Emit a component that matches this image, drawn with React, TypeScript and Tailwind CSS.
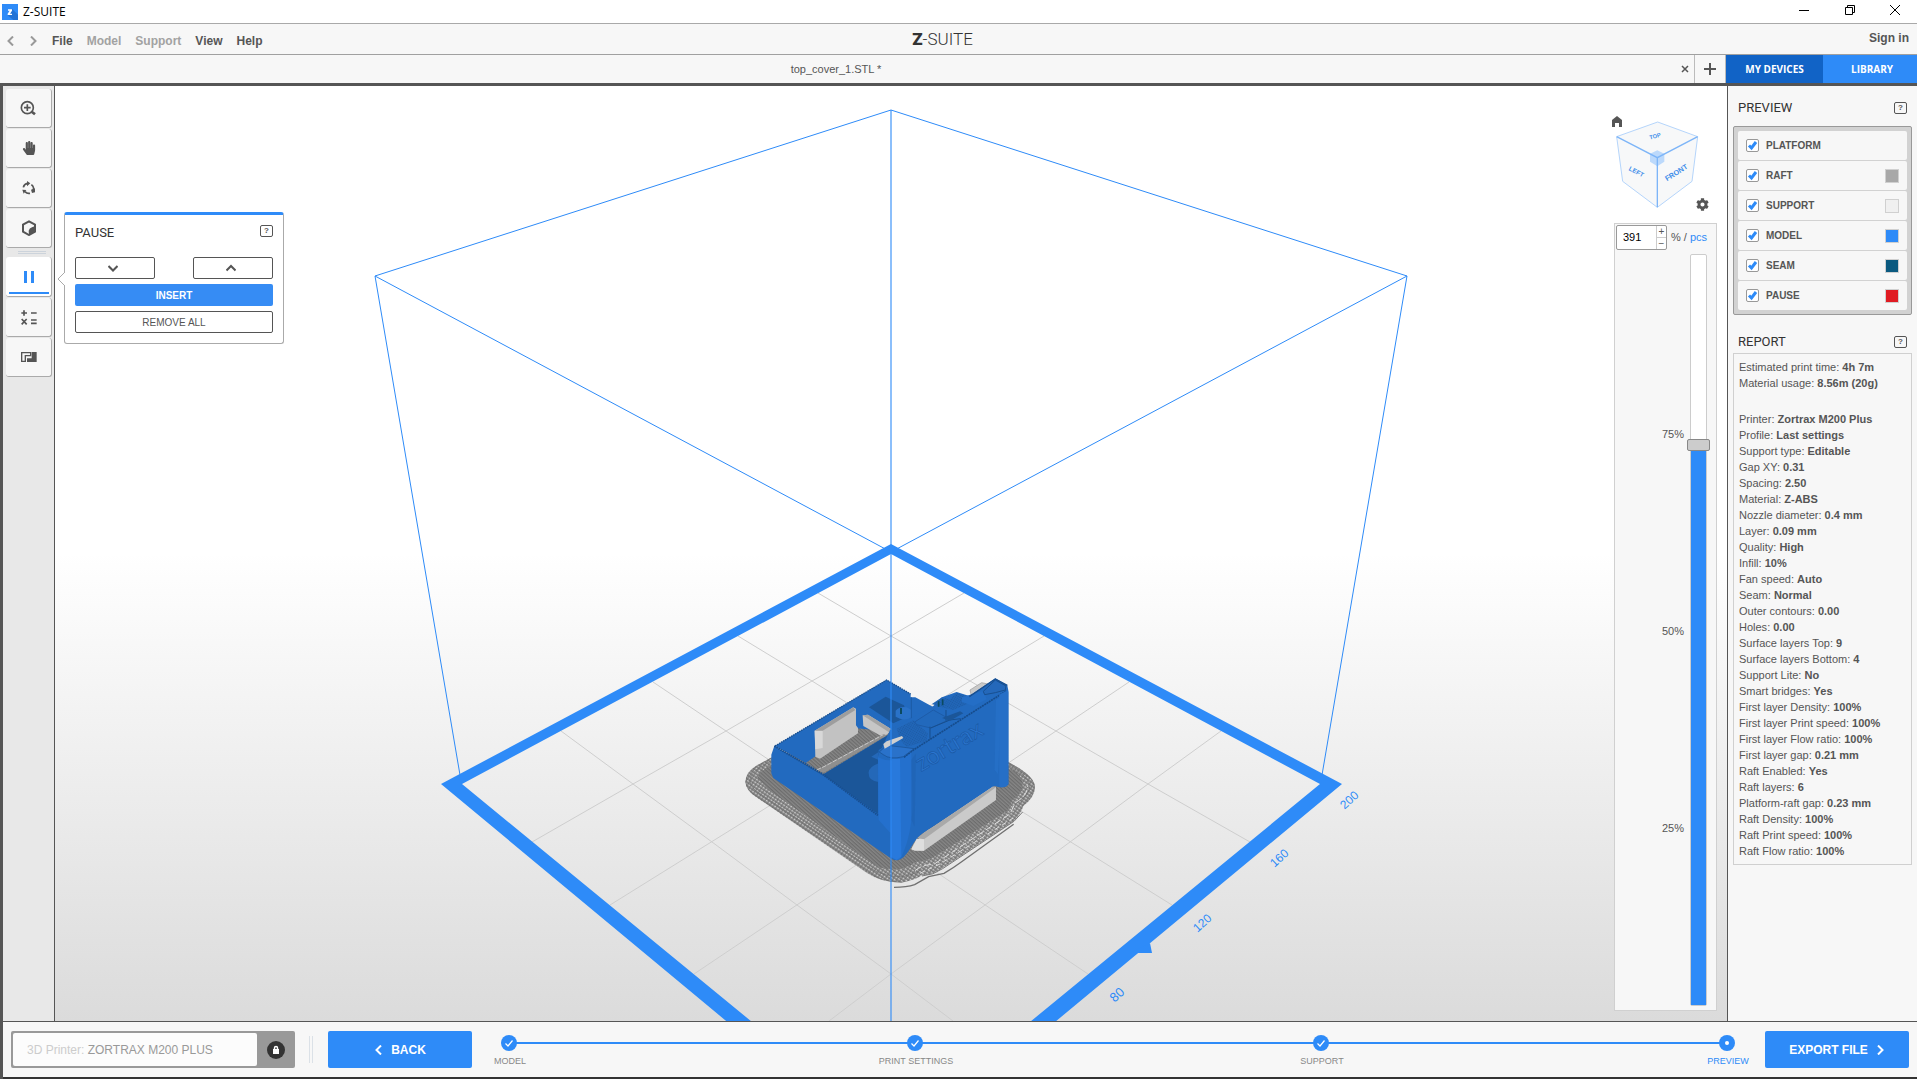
import { useState } from 'react'
import { FaHandPaper, FaCog } from 'react-icons/fa'

const layers = [
  { id: 'platform', label: 'PLATFORM', swatch: '' },
  { id: 'raft', label: 'RAFT', swatch: 'bg-[#a8a8a8]' },
  { id: 'support', label: 'SUPPORT', swatch: 'bg-[#f0f0f0]' },
  { id: 'model', label: 'MODEL', swatch: 'bg-[#2e8bf8]' },
  { id: 'seam', label: 'SEAM', swatch: 'bg-[#0b5a80]' },
  { id: 'pause', label: 'PAUSE', swatch: 'bg-[#e01b22]' },
]

const summary = [
  ['Estimated print time', '4h 7m'],
  ['Material usage', '8.56m (20g)'],
]

const report = [
  ['Printer', 'Zortrax M200 Plus'],
  ['Profile', 'Last settings'],
  ['Support type', 'Editable'],
  ['Gap XY', '0.31'],
  ['Spacing', '2.50'],
  ['Material', 'Z-ABS'],
  ['Nozzle diameter', '0.4 mm'],
  ['Layer', '0.09 mm'],
  ['Quality', 'High'],
  ['Infill', '10%'],
  ['Fan speed', 'Auto'],
  ['Seam', 'Normal'],
  ['Outer contours', '0.00'],
  ['Holes', '0.00'],
  ['Surface layers Top', '9'],
  ['Surface layers Bottom', '4'],
  ['Support Lite', 'No'],
  ['Smart bridges', 'Yes'],
  ['First layer Density', '100%'],
  ['First layer Print speed', '100%'],
  ['First layer Flow ratio', '100%'],
  ['First layer gap', '0.21 mm'],
  ['Raft Enabled', 'Yes'],
  ['Raft layers', '6'],
  ['Platform-raft gap', '0.23 mm'],
  ['Raft Density', '100%'],
  ['Raft Print speed', '100%'],
  ['Raft Flow ratio', '100%'],
]

const steps = ['MODEL', 'PRINT SETTINGS', 'SUPPORT', 'PREVIEW']

const MAX_LAYER = 521

function Chevron({ d, size = 9, width = 2 }: { d: string; size?: number; width?: number }) {
  return (
    <svg width={size} height={size} viewBox="0 0 10 10" fill="none" stroke="currentColor" strokeWidth={width}>
      <path d={d} />
    </svg>
  )
}

const LEFT = 'M7 0.5L2.5 5L7 9.5'
const RIGHT = 'M3 0.5L7.5 5L3 9.5'
const UP = 'M0.5 7.5L5 3L9.5 7.5'
const DOWN = 'M0.5 3L5 7.5L9.5 3'

function HelpButton() {
  return (
    <button aria-label="Help" className="flex h-3 w-[13px] items-center justify-center rounded-xs border border-[#555] text-[8px] font-bold leading-none text-[#555]">
      ?
    </button>
  )
}

function TitleBar() {
  return (
    <header className="flex h-6 items-start border-b border-[#a9a9a9] bg-white">
      <div className="flex h-[23px] items-center gap-[5px] pl-0.5 font-['Open_Sans',sans-serif] text-xs text-black">
        <svg width="16" height="16" viewBox="0 0 48 48">
          <rect width="48" height="48" fill="#2e8bf8" />
          <path d="M30 14L48 32V48H34L17 34Z" fill="#2273d6" />
          <path d="M18 16H30V20L24 29H30V33H17V29L23 20H18Z" fill="#fff" />
        </svg>
        Z-SUITE
      </div>
      <div className="ml-auto flex h-5 items-center">
        <button aria-label="Minimize" className="flex w-[46px] justify-center">
          <svg width="10" height="10" viewBox="0 0 10 10" stroke="#000"><path d="M0 5.5H10" /></svg>
        </button>
        <button aria-label="Restore" className="flex w-[46px] justify-center">
          <svg width="10" height="10" viewBox="0 0 10 10" fill="none" stroke="#000"><path d="M0.5 2.5H7.5V9.5H0.5ZM2.5 2.5V0.5H9.5V7.5H7.5" /></svg>
        </button>
        <button aria-label="Close" className="flex w-11 justify-center">
          <svg width="10" height="10" viewBox="0 0 10 10" stroke="#000"><path d="M0 0L10 10M10 0L0 10" /></svg>
        </button>
      </div>
    </header>
  )
}

function MenuBar() {
  return (
    <div className="grid h-[31px] grid-cols-[1fr_auto_1fr] items-center border-b border-[#a0a0a0] bg-[#f7f7f7] text-xs font-bold">
      <nav className="flex items-center gap-3.5 pl-1.5 pt-1">
        <div className="flex gap-3 text-[#999]">
          <button aria-label="Undo"><Chevron d={LEFT} size={10} /></button>
          <button aria-label="Redo"><Chevron d={RIGHT} size={10} /></button>
        </div>
        <button>File</button>
        <button disabled className="text-[#a2a2a2]">Model</button>
        <button disabled className="text-[#a2a2a2]">Support</button>
        <button>View</button>
        <button>Help</button>
      </nav>
      <div className="pr-8 font-[Roboto,sans-serif] text-[17px] font-light leading-none text-[#333]">
        <span className="font-black">Z</span>-SUITE
      </div>
      <a href="#" className="justify-self-end pr-2 pb-0.5">Sign in</a>
    </div>
  )
}

function TabBar() {
  return (
    <div className="flex h-[31px] border-b-3 border-[#555] bg-[#f7f7f7]">
      <button className="flex-1 text-[11px]">top_cover_1.STL *</button>
      <button aria-label="Close tab" className="flex w-[22px] items-center justify-center pl-1">
        <svg width="8" height="8" viewBox="0 0 8 8" stroke="#555" strokeWidth="1.500"><path d="M1 1L7 7M7 1L1 7" /></svg>
      </button>
      <button aria-label="New tab" className="flex w-8 items-center justify-center border-x border-[#bbb]">
        <svg width="12" height="12" viewBox="0 0 12 12" stroke="#555" strokeWidth="2"><path d="M0 6H12M6 0V12" /></svg>
      </button>
      <button className="w-[97px] bg-[#1163c6] font-['Open_Sans',sans-serif] text-[10px] font-bold text-white">MY DEVICES</button>
      <button className="w-[94px] bg-[#2e8bf8] pl-1 font-['Open_Sans',sans-serif] text-[10px] font-bold text-white">LIBRARY</button>
    </div>
  )
}

const tool = 'flex h-[39px] w-[46px] items-center justify-center rounded-[3px] border-b border-r border-[#aaa] bg-[#f7f7f7] text-[#555]'

function Toolbar() {
  return (
    <nav className="flex w-[52px] flex-col gap-px border-r border-[#555] bg-[#e8e8e8] pl-[3px] pt-[3px]">
      <button aria-label="Zoom" className={tool}>
        <svg width="17" height="16" viewBox="62 304 51 48" fill="none" stroke="currentColor" strokeWidth="5">
          <circle cx="84" cy="327" r="18" />
          <path d="M84 317V337M74 327H94" />
          <path d="M97 339L107 347" strokeWidth="8" />
        </svg>
      </button>
      <button aria-label="Pan" className={tool}><FaHandPaper size={14} /></button>
      <button aria-label="Rotate" className={tool}>
        <svg width="15" height="15" viewBox="64 544 45 45" fill="none" stroke="currentColor" strokeWidth="5">
          <path d="M71 563A16 16 0 0 1 84 551M95 555A16 16 0 0 1 101 572M91 581A16 16 0 0 1 76 576" />
          <path d="M82 544L92 551L82 560ZM94 570L106 566L106 578L97 580ZM68 570L80 571L72 582Z" fill="currentColor" stroke="none" />
        </svg>
      </button>
      <button aria-label="Views" className={tool}>
        <svg width="16" height="16" viewBox="63 662 48 48">
          <path d="M87 666L105 676V697L87 707L69 697V676Z" fill="none" stroke="currentColor" strokeWidth="6" />
          <path d="M106 680V697L87 708L86 694Q88 686 96 684Z" fill="currentColor" />
        </svg>
      </button>
      <div className="ml-3 mt-0.5 mb-0.5 h-[3px] w-7 border-y border-[#ccd3db]" />
      <button aria-label="Pause" className="flex h-10 w-[46px] flex-col items-center rounded-[3px] border-b border-r border-[#aaa] bg-white pt-3.5 text-[#2e8bf8]">
        <svg width="10" height="12" viewBox="0 0 10 12" fill="currentColor"><path d="M0 0H3V12H0ZM7 0H10V12H7Z" /></svg>
        <span className="mt-auto mb-0.5 h-0.5 w-10 bg-[#2e8bf8]" />
      </button>
      <button aria-label="Calculate" className={tool}>
        <svg width="16" height="15" viewBox="63 931 48 45" fill="none" stroke="currentColor" strokeWidth="5">
          <path d="M64 940H81M72 932V948M93 940H110M93 961H110M93 971H110M65 958L80 974M80 958L65 974" />
        </svg>
      </button>
      <button aria-label="Raft" className={tool}>
        <svg width="16" height="10" viewBox="63 1057 48 30">
          <path d="M65 1059H92V1068H76V1085H65Z" fill="none" stroke="currentColor" strokeWidth="4" />
          <path d="M81 1076H95V1057H110V1087H81Z" fill="currentColor" />
        </svg>
      </button>
    </nav>
  )
}

function PausePanel() {
  const outline = 'flex h-[22px] items-center justify-center rounded-xs border border-[#555] bg-white text-[#555]'
  return (
    <section className="absolute left-[9px] top-[126px] w-[220px] rounded-[3px] border border-t-3 border-[#aaa] border-t-[#2e8bf8] bg-white px-2.5 pb-2.5 pt-2.5">
      <svg className="absolute -left-2 top-14" width="8" height="16" viewBox="0 0 8 16" fill="#fff" stroke="#aaa">
        <path d="M8 1L1 8L8 15" />
      </svg>
      <div className="flex h-4 items-start justify-between">
        <h2 className="font-[Roboto,sans-serif] text-[13px] leading-4 text-[#333]">PAUSE</h2>
        <HelpButton />
      </div>
      <div className="mt-4 flex justify-between">
        <button aria-label="Next pause" className={outline + ' w-20 pr-1'}><Chevron d={DOWN} size={10} /></button>
        <button aria-label="Previous pause" className={outline + ' w-20 pr-1'}><Chevron d={UP} size={10} /></button>
      </div>
      <button className="mt-[5px] flex h-[22px] w-full items-center justify-center rounded-xs bg-[#368cf4] text-[10px] font-bold text-white">INSERT</button>
      <button className={outline + ' mt-[5px] w-full text-[10px]'}>REMOVE ALL</button>
    </section>
  )
}

// sliced part, drawn three times larger and scaled down by the parent
function PrintedPart() {
  return (
    <g transform="translate(720 660) scale(0.3333)">
      <defs>
        <pattern id="rim" width="10" height="9" patternUnits="userSpaceOnUse" patternTransform="rotate(34)">
          <rect width="10" height="9" fill="#858585" />
          <path d="M0 2H6" stroke="#d6d6d6" strokeWidth="3" />
          <path d="M4 7H10" stroke="#666" strokeWidth="2" />
        </pattern>
        <pattern id="raft" width="9" height="8" patternUnits="userSpaceOnUse" patternTransform="rotate(42)">
          <rect width="9" height="8" fill="#868686" />
          <path d="M0 2H9" stroke="#666" strokeWidth="3" />
        </pattern>
        <pattern id="mesh" width="6" height="6" patternUnits="userSpaceOnUse" patternTransform="rotate(30)">
          <rect width="6" height="6" fill="#2166b8" />
          <path d="M0 1H3" stroke="#184f90" strokeWidth="2" />
        </pattern>
      </defs>
      <path d="M500 110L155 292L112 315Q76 336 76 366Q78 392 108 411L440 638Q484 668 545 668Q584 661 606 646Q640 645 668 624L878 486Q904 462 910 438Q946 412 945 378Q940 344 864 306L700 220Z" fill="url(#rim)" />
      <path d="M500 110L150 318Q112 336 114 356L150 392L476 622Q540 640 588 606Q620 604 640 592L862 452L878 420Q912 394 908 366Q900 338 864 324L700 220Z" fill="url(#raft)" />
      <g fill="none" stroke="#707070" strokeWidth="2">
        <path d="M155 294L114 317Q78 338 78 366Q80 391 110 410L442 636Q484 666 545 666" />
        <path d="M155 302L122 322Q90 340 90 362Q92 384 120 402L450 624Q490 650 545 650Q580 646 604 628" />
        <path d="M866 308Q940 346 943 378Q944 410 908 436" />
        <path d="M866 316Q926 348 930 376Q928 404 894 426" />
      </g>
      <g fill="none" stroke="#ddd" strokeWidth="3" strokeDasharray="22 9">
        <path d="M585 632Q610 612 640 614L870 462L886 428Q926 404 922 376" />
        <path d="M600 640Q634 624 660 612L880 474" strokeDasharray="14 12" />
      </g>
      <path d="M606 648Q640 646 668 626L882 484L908 456" fill="none" stroke="#777" strokeWidth="3" />
      <path d="M522 682Q560 682 584 674L626 650L672 640Q700 624 724 606L881 493" fill="none" stroke="#707070" strokeWidth="4" />

      <path d="M750 90L785 68L804 72V90L755 110Z" fill="#c9c9c9" stroke="#999" strokeWidth="2" />
      {/* back walls and floor */}
      <path d="M165 258L500 60L572 102V112L586 112L638 140V200L480 290V480L310 340L256 308Z" fill="#226abf" />
      <path d="M447 142L497 110L552 136L562 170L520 190Z" fill="#1b5699" />
      <path d="M258 308L410 205L520 215L312 342Z" fill="url(#raft)" />
      <path d="M284 212L400 142L408 146V196L414 204V220L300 296L286 290Z" fill="#c2c2c2" />
      <path d="M284 212L300 206L308 212V264L286 268Z" fill="#d8d8d8" />
      <path d="M284 212L400 142L406 150L308 212" fill="#9d9d9d" />
      <path d="M428 166L444 164L518 210L490 232L430 198Z" fill="#c6c6c6" />
      <path d="M428 166L444 164L518 210L506 216Z" fill="#a5a5a5" />
      <path d="M312 342L516 218L545 230L476 270V470L290 344Z" fill="#1b5699" />
      <path d="M290 332L312 318L490 222L500 226L312 338Z" fill="#8f8f8f" />
      <path d="M290 330L312 320L490 224" fill="none" stroke="#c9c9c9" strokeWidth="3" strokeDasharray="14 4" />
      <path d="M446 340Q444 322 476 310V366Q446 364 446 340ZM454 290L476 276V300Z" fill="#2468b8" />
      <path d="M527 152Q540 138 560 142L574 150V172Q560 182 540 176L527 170Z" fill="#2a72c8" />
      <path d="M543 144V162" stroke="#0b4a60" strokeWidth="6" />
      <path d="M574 112V180" stroke="#1c5aa4" strokeWidth="3" />
      <path d="M165 258L500 60L572 102" fill="none" stroke="#184f90" strokeWidth="4" strokeDasharray="5 2" />

      {/* outer walls */}
      <path d="M154 284L163 258L310 344L474 462V290L510 210L640 138L666 112L710 96L748 108L826 55L862 76L866 96V372Q858 386 832 380L824 378L620 512Q592 528 574 560Q552 598 532 601Q520 602 508 592L160 354L154 340Z" fill="#226abf" />
      <path d="M163 258L310 344L474 466" fill="none" stroke="#184f90" strokeWidth="6" strokeDasharray="5 2" />
      <path d="M474 292Q510 310 552 292L574 276L578 440Q572 540 540 598Q524 604 512 590V520L476 480Z" fill="#2470cd" />
      <path d="M516 296H540L544 590L530 600L512 590Z" fill="#2879dc" />
      <path d="M552 292L580 270L860 92" fill="none" stroke="#164c8c" strokeWidth="5" strokeDasharray="6 2" />
      <path d="M530 206L580 180L624 220L620 244L560 260L540 240Z" fill="url(#mesh)" />
      <path d="M584 186L640 150L690 178L632 204L590 194Z" fill="#2269bc" stroke="#1b559d" strokeWidth="2" />
      <path d="M632 204L690 180L722 176M630 200V236M678 150V182" fill="none" stroke="#174e8e" strokeWidth="3" />
      <path d="M636 132L666 112L690 118L710 98L748 110L756 126L700 150L664 142Z" fill="url(#mesh)" />
      <path d="M726 112V126L760 138L800 118L790 92Z" fill="#246ec6" />
      <path d="M668 118V136M656 124V140" stroke="#0b4a60" strokeWidth="5" />
      <path d="M666 174L720 154L730 160L690 182Z" fill="#1b5699" />
      <path d="M790 94L826 60L858 78L856 90L826 98L794 104Z" fill="#2468ba" stroke="#184f90" strokeWidth="3" />
      <path d="M748 110L826 57L862 76" fill="none" stroke="#184f90" strokeWidth="4" />
      <path d="M478 276L500 256L552 262L582 266L550 290Q510 300 490 284Z" fill="#2a72ca" stroke="#184f90" strokeWidth="2" />
      <path d="M490 252L500 244L546 228L550 234L494 266Z" fill="#cfcfcf" />
      <path d="M828 120L824 330L834 342L844 110Z" fill="#2873cb" opacity="0.6" />
      <path d="M574 300L588 280L584 500L574 480Z" fill="#1f62b2" opacity="0.6" />
      <path d="M838 104L864 90V372Q856 386 838 380Z" fill="#266fc7" />
      <text x="604" y="336" transform="rotate(-31 604 336)" fontSize="72" fill="#2b75cf" stroke="#1a59a5" strokeWidth="2" fontFamily="Lato, sans-serif">zortrax</text>

      {/* front support */}
      <path d="M574 570L600 532Q606 520 640 500L818 380H828V420L612 572Z" fill="#cacaca" />
      <path d="M592 534Q606 520 640 500L818 380L828 382L612 538Z" fill="#a9a9a9" />
      <path d="M574 566L590 536L612 538V572H584Z" fill="#dedede" />
    </g>
  )
}

function Scene() {
  return (
    <svg className="absolute inset-0 h-full w-full" viewBox="55 86 1672 935" preserveAspectRatio="xMidYMid slice">
      <g fill="none" stroke="#cecece">
        <path d="M818 593L891 636L970 681L1056 731L1148 784L1250 842" />
        <path d="M738 636L812 681L1172 905" />
        <path d="M653 682L726 731L1088 974" />
        <path d="M561 731L633 784L712 842L797 905L891 974L953 1021" />
        <path d="M964 593L891 636L812 681L726 731L633 784L532 842" />
        <path d="M1044 636L970 681L610 905" />
        <path d="M1129 682L1056 731L694 974" />
        <path d="M1221 731L1148 784L1070 842L985 905L891 974L829 1021" />
      </g>
      <g fill="none" stroke="#2e8bf8">
        <path d="M891 110L375 276L460 775M891 110L1407 276L1322 775" />
        <path d="M375 276L891 552L1407 276" />
      </g>
      <path
        d="M891 544L441 784L891 1158L1342 784ZM891 554L1320 784L891 1136L462 784Z"
        fill="#2e8bf8"
        fillRule="evenodd"
      />
      <path d="M1150 943L1152 953H1130Z" fill="#2e8bf8" />
      <g fill="#2e8bf8" fontSize="12" textAnchor="middle" fontFamily="'Liberation Sans', sans-serif">
        <text x="1352" y="803" transform="rotate(-42 1352 803)">200</text>
        <text x="1282" y="861" transform="rotate(-42 1282 861)">160</text>
        <text x="1205" y="926" transform="rotate(-42 1205 926)">120</text>
        <text x="1120" y="998" transform="rotate(-42 1120 998)" fontSize="13">80</text>
      </g>
      <PrintedPart />
      <path d="M891 110V1021" stroke="#2e8bf8" strokeWidth="2" opacity="0.55" />
    </svg>
  )
}

function ViewCube() {
  return (
    <div className="relative h-[137px]">
      <svg className="absolute left-0 top-[27px]" width="103" height="100" viewBox="30 340 309 300">
        <path d="M50 411L173 367L293 411L276 545L172 623L68 545Z" fill="#f7f8f9" />
        <path d="M50 411L173 367L293 411L276 545L172 623L68 545Z" fill="none" stroke="#b5d5fb" strokeWidth="3" />
        <path d="M172 452L193 462V486L172 500L150 486V462Z" fill="#bcd9fb" />
        <path d="M50 411L172 474L293 411M172 474V623" fill="none" stroke="#7db5f8" strokeWidth="4" />
        <g fill="#3f8eea" fontFamily="'Liberation Sans', sans-serif" fontWeight="bold" textAnchor="middle">
          <text x="167" y="415" fontSize="17" transform="rotate(-16 167 415)">TOP</text>
          <text x="106" y="522" fontSize="19" transform="rotate(28 106 522)">LEFT</text>
          <text x="233" y="525" fontSize="22" transform="rotate(-32 233 525)">FRONT</text>
        </g>
      </svg>
      <button aria-label="Home view" className="absolute left-0.5 top-[30px] text-[#555]">
        <svg width="10" height="11" viewBox="0 0 10 11" fill="currentColor"><path d="M5 0L10 4V11H7V7H3V11H0V4Z" /></svg>
      </button>
      <button aria-label="View settings" className="absolute right-2 top-28 text-[#555]"><FaCog size={13} /></button>
    </div>
  )
}

function LayerSlider() {
  const [layer, setLayer] = useState(391)
  const percent = (layer / MAX_LAYER) * 100
  return (
    <div className="ml-auto mb-2.5 flex w-[103px] flex-1 flex-col border border-[#d0d0d0] bg-[#f7f7f7] p-px">
      <div className="flex items-center text-[11px]">
        <div className="flex h-[25px] w-[51px] rounded-xs border border-[#999] bg-white">
          <input
            aria-label="Layer"
            className="w-[39px] pl-1.5 text-black outline-none"
            value={layer}
            onChange={(e) => setLayer(Number(e.target.value) || 0)}
          />
          <div className="flex flex-1 flex-col border-l border-[#ccc] text-[10px] leading-none text-[#555]">
            <button aria-label="Layer up" className="flex flex-1 items-center justify-center border-b border-[#ccc]" onClick={() => setLayer(Math.min(MAX_LAYER, layer + 1))}>+</button>
            <button aria-label="Layer down" className="flex flex-1 items-center justify-center" onClick={() => setLayer(Math.max(0, layer - 1))}>−</button>
          </div>
        </div>
        <span className="ml-1 whitespace-pre">% / <a href="#" className="text-[#2e8bf8]">pcs</a></span>
      </div>
      <div className="mt-1 mb-[3px] flex flex-1 justify-end gap-1.5 pr-2">
        <div className="flex flex-col justify-between pt-[172px] pb-[170px] text-[11px] leading-4">
          <span>75%</span>
          <span>50%</span>
          <span>25%</span>
        </div>
        <div className="relative w-[17px] rounded-xs border border-[#ccc] bg-white">
          <div className="absolute inset-x-0 bottom-0 bg-[#2e8bf8]" style={{ height: `${percent}%` }} />
          <input
            type="range"
            aria-label="Visible layers"
            min={0}
            max={MAX_LAYER}
            value={layer}
            onChange={(e) => setLayer(Number(e.target.value))}
            className="absolute inset-y-0 -left-1 h-full w-[23px] appearance-none bg-transparent [writing-mode:vertical-lr] [direction:rtl] [&::-webkit-slider-thumb]:h-3 [&::-webkit-slider-thumb]:w-[23px] [&::-webkit-slider-thumb]:appearance-none [&::-webkit-slider-thumb]:rounded-xs [&::-webkit-slider-thumb]:border [&::-webkit-slider-thumb]:border-[#888] [&::-webkit-slider-thumb]:bg-[#ccc]"
          />
        </div>
      </div>
    </div>
  )
}

function ReportLine({ name, value }: { name: string; value: string }) {
  return (
    <li>
      {name}: <b>{value}</b>
    </li>
  )
}

function Sidebar() {
  return (
    <aside className="flex w-[190px] flex-col border-l border-[#555] bg-[#f7f7f7] pl-[5px] pr-[5px]">
      <div className="flex h-10 items-center justify-between pl-[5px] pr-[5px] pt-1">
        <h2 className="font-[Roboto,sans-serif] text-[13px] text-[#333]">PREVIEW</h2>
        <HelpButton />
      </div>
      <div className="flex flex-col gap-px rounded-xs border border-[#999] bg-[#d2d2d2] p-1">
        {layers.map((l) => (
          <label key={l.id} className="flex h-[29px] items-center rounded-xs bg-[#f7f7f7] px-2 text-[10px] font-bold">
            <input
              type="checkbox"
              defaultChecked
              className="peer h-[13px] w-[13px] appearance-none rounded-xs border border-[#999] bg-white"
            />
            <svg className="pointer-events-none invisible -ml-[13px] peer-checked:visible" width="13" height="13" viewBox="0 0 13 13" fill="none" stroke="#2e8bf8" strokeWidth="3">
              <path d="M3 6.5L5.5 9L10 3" />
            </svg>
            <span className="ml-[7px]">{l.label}</span>
            {l.swatch && <span className={`ml-auto h-3.5 w-3.5 border border-[#d0d0d0] ${l.swatch}`} />}
          </label>
        ))}
      </div>
      <div className="mt-3 flex h-[26px] items-center justify-between px-[5px] pt-1">
        <h2 className="font-[Roboto,sans-serif] text-[13px] text-[#333]">REPORT</h2>
        <HelpButton />
      </div>
      <div className="border border-[#d0d0d0] pb-[5px] pl-[5px] pt-[5px] text-[11px] leading-4">
        <ul className="mb-5">
          {summary.map(([name, value]) => <ReportLine key={name} name={name} value={value} />)}
        </ul>
        <ul>
          {report.map(([name, value]) => <ReportLine key={name} name={name} value={value} />)}
        </ul>
      </div>
    </aside>
  )
}

function Footer() {
  return (
    <footer className="flex h-[58px] items-center border-t border-b-2 border-t-[#555] border-b-[#333] bg-[#f7f7f7] pl-2 pr-2">
      <div className="flex h-[37px] w-[284px] rounded-xs border-2 border-[#999] bg-[#999]">
        <div className="flex flex-1 items-center rounded-xs bg-[#fcfcfc] pl-3.5 text-xs text-[#999]">
          <span className="whitespace-pre text-[#ccc]">3D Printer: </span>ZORTRAX M200 PLUS
        </div>
        <button aria-label="Unlock printer" className="flex w-9 items-center justify-center pl-0.5">
          <svg width="18" height="18" viewBox="0 0 18 18">
            <circle cx="9" cy="9" r="9" fill="#333" />
            <path d="M6 8H12V13H6Z" fill="#fff" />
            <path d="M7.500 8V7A1.500 1.500 0 0 1 10.500 7V8" fill="none" stroke="#fff" strokeWidth="1.500" />
          </svg>
        </button>
      </div>
      <div className="ml-3.5 h-[27px] w-1 border-x border-[#dbe1e7]" />
      <button className="ml-[15px] flex h-[37px] w-36 items-center justify-center gap-[7px] rounded-xs bg-[#2e8bf8] text-xs font-bold text-white">
        <Chevron d={LEFT} size={10} />
        BACK
      </button>
      <ol className="relative ml-[5px] mr-1.5 flex flex-1 justify-between pt-[3px]">
        <div className="absolute inset-x-8 top-2.5 h-0.5 bg-[#2e8bf8]" />
        {steps.map((step, i) => {
          const current = i === steps.length - 1
          return (
            <li key={step} className="relative flex w-16 flex-col items-center gap-1">
              <svg width="16" height="16" viewBox="0 0 16 16">
                <circle cx="8" cy="8" r="8" fill="#2e8bf8" />
                {current
                  ? <circle cx="8" cy="8" r="2" fill="#fff" />
                  : <path d="M4.500 8.500L7 11L11.500 5.500" fill="none" stroke="#fff" strokeWidth="1.200" />}
              </svg>
              <span className={current ? 'whitespace-nowrap pl-0.5 text-[9px] leading-3 text-[#2e8bf8]' : 'whitespace-nowrap pl-0.5 text-[9px] leading-3 text-[#888]'}>
                {step}
              </span>
            </li>
          )
        })}
      </ol>
      <button className="flex h-[37px] w-36 items-center justify-center gap-[7px] rounded-xs bg-[#2e8bf8] text-xs font-bold text-white">
        EXPORT FILE
        <Chevron d={RIGHT} size={10} />
      </button>
    </footer>
  )
}

export default function App() {
  return (
    <div className="flex min-h-screen flex-col bg-[#f7f7f7] font-['Liberation_Sans',Arial,sans-serif] text-[#555]">
      <TitleBar />
      <MenuBar />
      <TabBar />
      <div className="flex flex-1 flex-col border-l-3 border-[#555]">
        <main className="flex flex-1">
          <Toolbar />
          <div className="relative flex-1 overflow-hidden bg-linear-to-b from-white from-50% to-[#dbdbdb]">
            <Scene />
            <PausePanel />
            <div className="absolute inset-y-0 right-2.5 flex w-[107px] flex-col">
              <ViewCube />
              <LayerSlider />
            </div>
          </div>
          <Sidebar />
        </main>
        <Footer />
      </div>
    </div>
  )
}
